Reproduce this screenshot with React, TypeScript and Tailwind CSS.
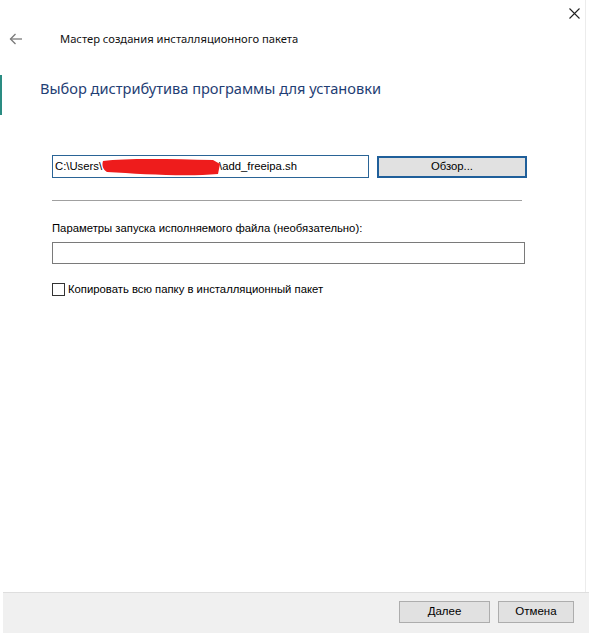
import React from 'react';

function BackArrow() {
  return (
    <svg width="14" height="12" viewBox="0 0 14 12" fill="none" stroke="#7a7a7a" strokeWidth="1.3">
      <path d="M13 6H1.5" />
      <path d="M6.5 1L1.5 6l5 5" />
    </svg>
  );
}

function CloseIcon() {
  return (
    <svg width="11" height="11" viewBox="0 0 11 11" fill="none" stroke="#222" strokeWidth="1.1">
      <path d="M0.5 0.5l10 10M10.5 0.5l-10 10" />
    </svg>
  );
}

function Scribble() {
  return (
    <svg width="122" height="20" viewBox="0 0 122 20" className="absolute left-[48px] top-[1px]">
      <path d="M2 4 C25 1 70 2 112 3 L119 7 L117 17 C85 20 40 17 6 15 C1 12 1 7 2 4 Z" fill="#ee1c1c" />
    </svg>
  );
}

export default function App() {
  const sans = { fontFamily: '"Liberation Sans", Arial, sans-serif' };
  return (
    <div className="w-[589px] h-[633px] bg-white flex flex-col overflow-hidden relative" style={{ fontFamily: '"Noto Sans", "Open Sans", sans-serif' }}>
      {/* left accent */}
      <div className="absolute left-0 top-[75px] w-[2px] h-[40px] bg-[#2a8c82]" />
      <div className="absolute right-[3px] top-0 w-[1px] h-[592px] bg-[#ececec]" />

      {/* title bar */}
      <div className="h-[22px] flex justify-end items-center pr-[9px] pt-[4px]">
        <CloseIcon />
      </div>
      <div className="h-[34px] flex items-center">
        <div className="w-[60px] pl-[9px] flex items-center">
          <BackArrow />
        </div>
        <span className="text-[11.2px] text-[#111]">Мастер создания инсталляционного пакета</span>
      </div>

      {/* heading */}
      <div className="pl-[40px] pt-[22px] text-[14.6px] text-[#1f3e74] leading-[20px]">
        Выбор дистрибутива программы для установки
      </div>

      {/* form */}
      <div className="pl-[52px] pt-[57px] flex flex-col text-[11.3px] text-black" style={sans}>
        <div className="flex items-center gap-[8px]">
          <div className="relative w-[317px] h-[23px] border border-[#2a6496] flex items-center pl-[2px] overflow-hidden">
            <span className="whitespace-nowrap">C:\Users\</span>
            <Scribble />
            <span className="ml-[117px] whitespace-nowrap">\add_freeipa.sh</span>
          </div>
          <div className="w-[150px] h-[22px] bg-[#e1e1e1] border-2 border-[#1f5f9a] flex items-center justify-center">
            Обзор...
          </div>
        </div>

        <div className="mt-[22px] w-[470px] h-px bg-[#a0a0a0]" />

        <div className="mt-[20px] leading-[14px]">Параметры запуска исполняемого файла (необязательно):</div>
        <div className="mt-[7px] w-[473px] h-[22px] border border-[#7a7a7a] bg-white" />

        <label className="mt-[17px] flex items-center gap-[3px]">
          <span className="w-[13px] h-[13px] border border-[#333] bg-white" />
          <span>Копировать всю папку в инсталляционный пакет</span>
        </label>
      </div>

      <div className="flex-1" />

      {/* footer */}
      <div className="h-[41px] ml-[3px] bg-[#f0f0f0] border-t border-[#dedede] flex items-start justify-end gap-[8px] pt-[8px] pr-[15px] text-[11.5px]" style={sans}>
        <div className="w-[91px] h-[22px] bg-[#e1e1e1] border border-[#adadad] flex items-center justify-center">Далее</div>
        <div className="w-[76px] h-[22px] bg-[#e1e1e1] border border-[#adadad] flex items-center justify-center">Отмена</div>
      </div>
    </div>
  );
}
